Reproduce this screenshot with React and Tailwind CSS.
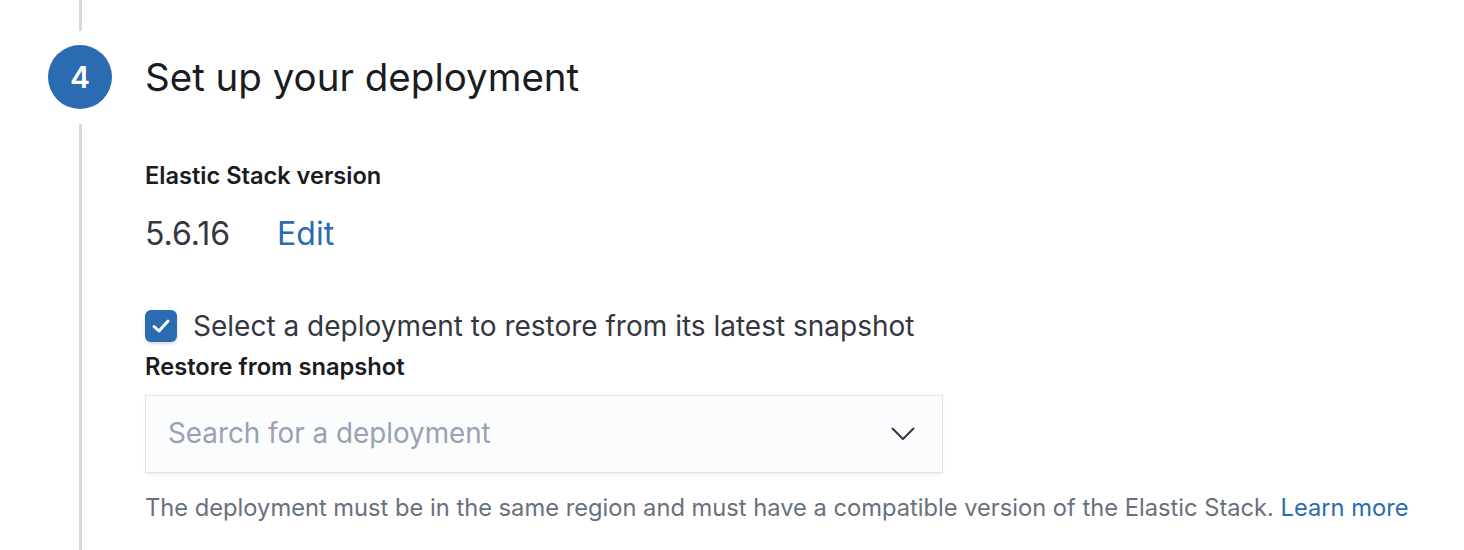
import React, { useState } from 'react';

const ChevronDown = () => (
    <svg width="24" height="14" viewBox="0 0 24 14" fill="none">
        <path d="M1.5 1.5 L12 12 L22.5 1.5" stroke="#343741" strokeWidth="2" strokeLinecap="round" strokeLinejoin="round" />
    </svg>
);

const App = () => {
    const [restore, setRestore] = useState(true);

    return (
        <div className="h-[550px] w-full overflow-hidden bg-white text-[#343741]" style={{ fontFamily: 'Inter, "Noto Sans", sans-serif' }}>
            <div className="flex h-full">
                {/* Step rail */}
                <div className="ml-[48px] flex w-16 flex-col items-center">
                    <div className="h-[31px] w-[3px] bg-[#d3dae6]" />
                    <div className="mt-[14px] flex h-16 w-16 items-center justify-center rounded-full bg-[#2a6bb1] text-[30px] font-semibold text-white">
                        4
                    </div>
                    <div className="mt-[15px] w-[3px] flex-1 bg-[#d3dae6]" />
                </div>

                {/* Step content */}
                <div className="ml-[33px] flex-1">
                    <div className="mt-[45px] flex h-16 items-center">
                        <h2 className="text-[38.5px] leading-none text-[#1a1c21]">Set up your deployment</h2>
                    </div>

                    <div className="mt-[53px] text-[23.6px] font-semibold leading-[28px] text-[#1a1c21]">Elastic Stack version</div>

                    <div className="mt-[26px] flex items-center text-[32px] leading-[36px]">
                        <span className="text-[#343741]">5.6.16</span>
                        <button type="button" className="ml-[47px] text-[#2a6bb1]">
                            Edit
                        </button>
                    </div>

                    <label className="mt-[56px] flex cursor-pointer items-center">
                        <span
                            onClick={() => setRestore(!restore)}
                            className={`flex h-8 w-8 items-center justify-center rounded-[6px] shadow-[0_2px_3px_rgba(0,0,0,0.15)] ${restore ? 'bg-[#2a6bb1]' : 'border border-[#d3dae6] bg-white'}`}
                        >
                            {restore && (
                                <svg width="20" height="16" viewBox="0 0 20 16" fill="none">
                                    <path d="M3 8.5 L8 13 L17 3" stroke="white" strokeWidth="3" strokeLinecap="round" strokeLinejoin="round" />
                                </svg>
                            )}
                        </span>
                        <span className="ml-[16px] text-[28px] leading-[36px] text-[#343741]">
                            Select a deployment to restore from its latest snapshot
                        </span>
                    </label>

                    <div className="mt-[9px] text-[23.7px] font-semibold leading-[28px] text-[#1a1c21]">Restore from snapshot</div>

                    <div className="mt-[14px] flex h-[78px] w-[798px] items-center justify-between border border-[#e1e4ea] bg-[#fbfcfd] pl-[22px] pr-[27px] shadow-[0_2px_3px_rgba(0,0,0,0.06)]">
                        <span className="text-[27.8px] text-[#98a2b3]">Search for a deployment</span>
                        <ChevronDown />
                    </div>

                    <p className="mt-[19px] text-[23.7px] leading-[32px] text-[#69707d]">
                        The deployment must be in the same region and must have a compatible version of the Elastic Stack.{' '}
                        <a href="#" className="text-[#2a6bb1]">
                            Learn more
                        </a>
                    </p>
                </div>
            </div>
        </div>
    );
};

export default App;
